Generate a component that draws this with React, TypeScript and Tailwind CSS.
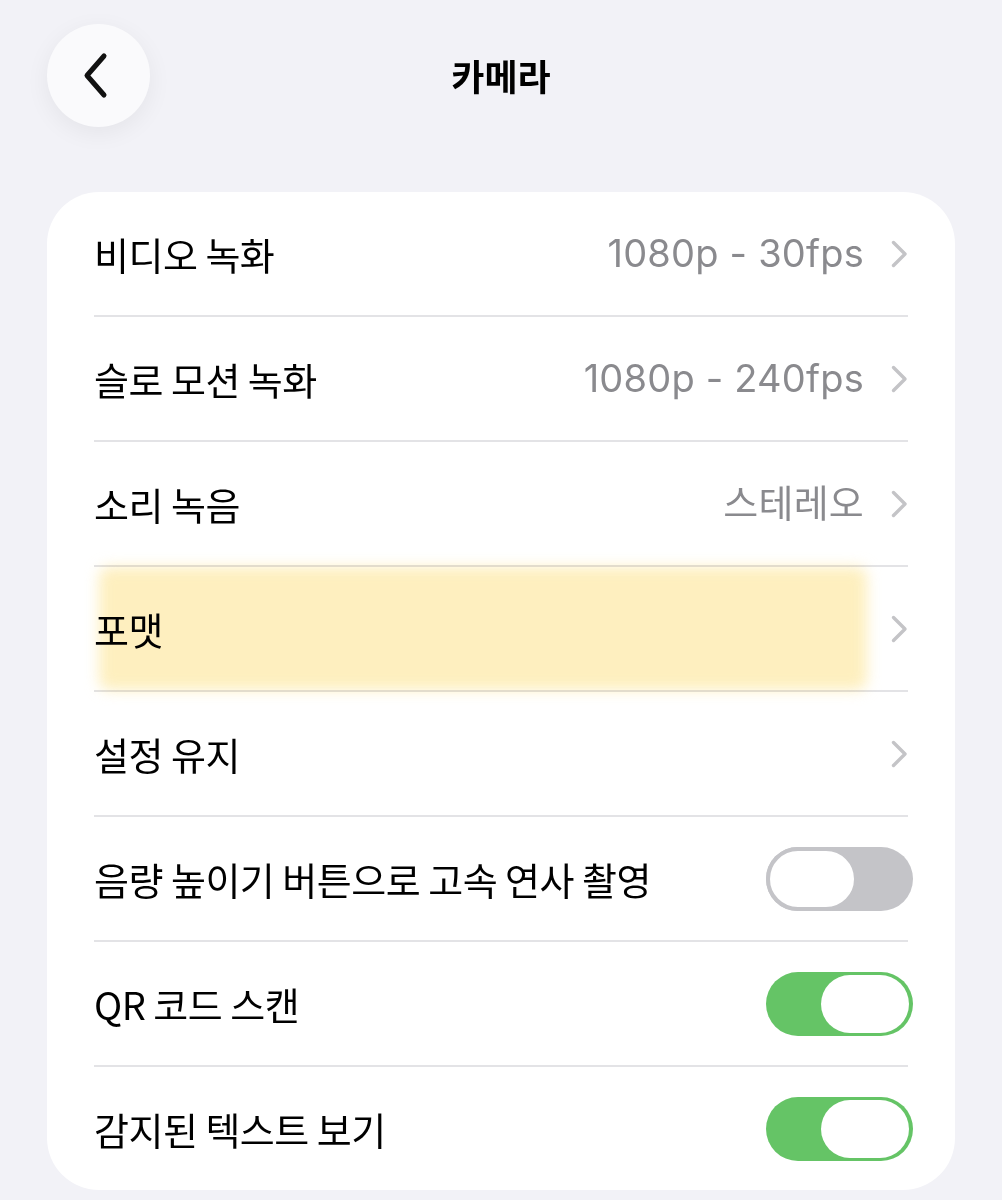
import React from "react";

const Chevron = () => (
  <svg width="20" height="28" viewBox="0 0 20 28" className="shrink-0">
    <path d="M4.5 2.5 L16 14 L4.5 25.5" fill="none" stroke="#c4c4c7" strokeWidth="3.4" strokeLinecap="round" strokeLinejoin="round" />
  </svg>
);

const Toggle = ({ on }: { on: boolean }) =>
  on ? (
    <div className="mr-[-4px] w-[147px] h-[64px] rounded-full bg-[#65c466] flex items-center justify-end pr-[4px] shrink-0">
      <div className="w-[88px] h-[58px] rounded-full bg-white" />
    </div>
  ) : (
    <div className="mr-[-4px] w-[147px] h-[64px] rounded-full bg-[#c4c4c8] flex items-center justify-start shrink-0">
      <div className="w-[92px] h-[64px] rounded-full bg-white border-[4px] border-[#c4c4c8]" />
    </div>
  );

type Row = { label: string; value?: string; chevron?: boolean; toggle?: boolean; on?: boolean; highlight?: boolean };

const rows: Row[] = [
  { label: "비디오 녹화", value: "1080p - 30fps", chevron: true },
  { label: "슬로 모션 녹화", value: "1080p - 240fps", chevron: true },
  { label: "소리 녹음", value: "스테레오", chevron: true },
  { label: "포맷", chevron: true, highlight: true },
  { label: "설정 유지", chevron: true },
  { label: "음량 높이기 버튼으로 고속 연사 촬영", toggle: true, on: false },
  { label: "QR 코드 스캔", toggle: true, on: true },
  { label: "감지된 텍스트 보기", toggle: true, on: true },
];

export default function App() {
  return (
    <div
      className="w-[1002px] h-[1200px] bg-[#f2f2f7] overflow-hidden flex flex-col"
      style={{ fontFamily: '"Inter", "Noto Sans CJK KR", sans-serif' }}
    >
      <div className="relative h-[192px] shrink-0">
        <div className="absolute left-[47px] top-[24px] w-[103px] h-[103px] rounded-full bg-[#fafafc] shadow-[0_6px_24px_rgba(0,0,0,0.06)] flex items-center justify-center">
          <svg width="34" height="50" viewBox="0 0 34 50" className="ml-[-6px]">
            <path d="M25 5 L8 24.5 L25 44" fill="none" stroke="#111" strokeWidth="5" strokeLinecap="round" strokeLinejoin="round" />
          </svg>
        </div>
        <div className="absolute left-0 right-0 top-[50px] text-center text-[36px] font-bold text-black leading-[50px]" style={{ fontFamily: '"Noto Sans CJK KR", sans-serif' }}>
          카메라
        </div>
      </div>
      <div className="mx-[47px] bg-white rounded-[52px] flex flex-col">
        {rows.map((r, i) => (
          <div key={i} className="flex flex-col">
            {i > 0 && <div className="ml-[47px] mr-[47px] h-[2px] bg-[#e3e3e6]" />}
            <div className="relative h-[123px] pl-[47px] pr-[46px] flex items-center justify-between">
              {r.highlight && (
                <div className="absolute left-[52px] right-[88px] top-[0px] bottom-[0px] bg-[#fde594] opacity-60 blur-[7px] rounded-[10px] mix-blend-multiply" />
              )}
              <span className="relative text-[38px] text-black tracking-[-0.5px]" style={{ fontFamily: '"Noto Sans CJK KR", sans-serif' }}>
                {r.label}
              </span>
              <div className="relative flex items-center gap-[25px]">
                {r.value && (
                  <span className="text-[38px] text-[#8a8a8e] tracking-[0.2px]">
                    {r.value}
                  </span>
                )}
                {r.chevron && <Chevron />}
                {r.toggle && <Toggle on={!!r.on} />}
              </div>
            </div>
          </div>
        ))}
      </div>
    </div>
  );
}
